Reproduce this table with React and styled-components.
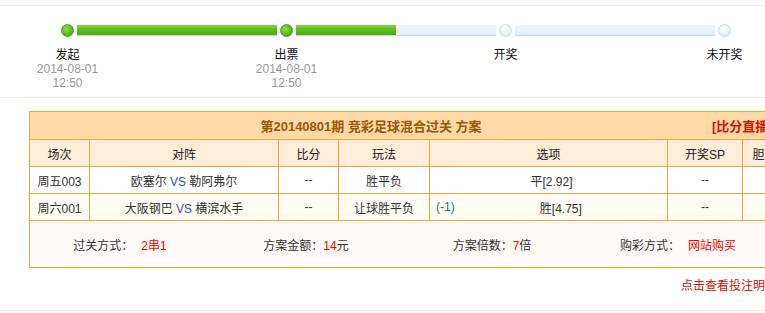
import React from "react";
import styled, { createGlobalStyle } from "styled-components";

/* ========== DATA ========== */

const steps = [
  { name: "发起", date: "2014-08-01", time: "12:50", done: true },
  { name: "出票", date: "2014-08-01", time: "12:50", done: true },
  { name: "开奖", done: false },
  { name: "未开奖", done: false },
];

// fill of the bar that follows each step (percent)
const bars = [100, 50, 0];

const matches = [
  { no: "周五003", home: "欧塞尔", away: "勒阿弗尔", score: "--", play: "胜平负", handicap: "", pick: "平[2.92]", sp: "--" },
  { no: "周六001", home: "大阪钢巴", away: "横滨水手", score: "--", play: "让球胜平负", handicap: "(-1)", pick: "胜[4.75]", sp: "--" },
];

/* ========== STYLES ========== */

const GlobalStyle = createGlobalStyle`
  body {
    margin: 0;
    background: #fff;
    overflow: hidden;
    font-family: "Liberation Sans", "Noto Sans CJK SC", sans-serif;
    font-size: 12px;
    color: #333;
  }
`;

const Page = styled.div`
  width: 800px;
  padding-top: 5px;
`;

const StepPanel = styled.div`
  height: 73px;
  border-top: 1px solid #f9ece4;
  border-bottom: 1px solid #f9ece4;
  padding: 18px 0 0 61px;
`;

const Track = styled.div`
  display: flex;
  align-items: flex-start;
`;

const Step = styled.div`
  width: 13px;
  flex: none;
`;

const Node = styled.div`
  width: 13px;
  height: 13px;
  box-sizing: border-box;
  border-radius: 50%;
  border: 1px solid ${({ $done }) => ($done ? "#4e9f1e" : "#c9d9e7")};
  background: ${({ $done }) =>
    $done
      ? "radial-gradient(circle at 40% 35%, #92e050, #5cb81a 55%, #449d0c)"
      : "radial-gradient(circle at 40% 35%, #ffffff, #e6f0f9 60%, #d6e4f0)"};
`;

const Caption = styled.div`
  margin: 11px -54px 0;
  text-align: center;
  line-height: 14px;
  white-space: nowrap;
`;

const StepName = styled.div`
  color: #111;
`;

const StepTime = styled.div`
  color: #9a9a9a;
`;

const Bar = styled.div`
  width: 200px;
  height: 11px;
  margin: 1px 3px 0;
  flex: none;
  box-sizing: border-box;
  border-bottom: 1px solid #c8d9e6;
  background: linear-gradient(#eef6fd, #deecf8);
  overflow: hidden;
`;

const BarFill = styled.div`
  height: 11px;
  background: linear-gradient(#86d646, #5fc01e 35%, #4faf12 85%, #3f920c);
`;

const Table = styled.table`
  margin: 13px 0 0 29px;
  width: 757px;
  border-collapse: collapse;
  table-layout: fixed;
  border: 1px solid #f7a23a;
`;

const Cell = styled.td`
  border: 1px solid #f7a23a;
  height: 26px;
  padding: 0;
  text-align: center;
  white-space: nowrap;
  overflow: hidden;
`;

const TitleCell = styled(Cell)`
  height: 27px;
  background: #fed9a6;
  font-size: 13px;
  font-weight: bold;
  color: #9b5608;
`;

const LiveLink = styled.span`
  float: right;
  width: 74px;
  text-align: left;
  color: #dd1100;
`;

const HeadRow = styled.tr`
  background: #feedd8;
  color: #222;
`;

const BodyRow = styled.tr`
  background: ${({ $alt }) => ($alt ? "#fffcf3" : "#fff")};
`;

const Vs = styled.span`
  color: #35559a;
`;

const PickBox = styled.div`
  display: flex;
  align-items: center;
  padding-left: 6px;
`;

const Handicap = styled.span`
  color: #0d7f70;
`;

const PickText = styled.span`
  flex: 1;
  text-align: center;
`;

const SummaryCell = styled(Cell)`
  height: 46px;
  background: #fffaf7;
`;

const Summary = styled.div`
  display: grid;
  grid-template-columns: repeat(4, 186px);
  margin-left: -3px;
`;

const SummaryItem = styled.div`
  text-align: center;
  color: #333;
`;

const Red = styled.span`
  color: #f00;
  margin-left: ${({ $gap }) => ($gap ? "8px" : "0")};
`;

const DetailRow = styled.div`
  width: 777px;
  margin-top: 11px;
  text-align: right;
  color: #dd1100;
  line-height: 14px;
`;

const Footer = styled.div`
  margin-top: 17px;
  height: 10px;
  border-top: 1px solid #f5ede6;
  background: #faf7f5;
`;

/* ========== COMPONENT ========== */

const App = () => {
  return (
    <>
      <GlobalStyle />
      <Page>
        <StepPanel>
          <Track>
            {steps.map((s, i) => (
              <React.Fragment key={s.name}>
                <Step>
                  <Node $done={s.done} />
                  <Caption>
                    <StepName>{s.name}</StepName>
                    {s.date && <StepTime>{s.date}</StepTime>}
                    {s.time && <StepTime>{s.time}</StepTime>}
                  </Caption>
                </Step>
                {i < bars.length && (
                  <Bar>
                    <BarFill style={{ width: `${bars[i]}%` }} />
                  </Bar>
                )}
              </React.Fragment>
            ))}
          </Track>
        </StepPanel>

        <Table>
          <colgroup>
            <col style={{ width: 60 }} />
            <col style={{ width: 189 }} />
            <col style={{ width: 60 }} />
            <col style={{ width: 91 }} />
            <col style={{ width: 238 }} />
            <col style={{ width: 75 }} />
            <col style={{ width: 44 }} />
          </colgroup>
          <tbody>
            <tr>
              <TitleCell colSpan={7}>
                <LiveLink>[比分直播]</LiveLink>
                第20140801期 竞彩足球混合过关 方案
              </TitleCell>
            </tr>
            <HeadRow>
              <Cell>场次</Cell>
              <Cell>对阵</Cell>
              <Cell>比分</Cell>
              <Cell>玩法</Cell>
              <Cell>选项</Cell>
              <Cell>开奖SP</Cell>
              <Cell>胆码</Cell>
            </HeadRow>
            {matches.map((m, i) => (
              <BodyRow key={m.no} $alt={i % 2 === 1}>
                <Cell>{m.no}</Cell>
                <Cell>
                  {m.home} <Vs>VS</Vs> {m.away}
                </Cell>
                <Cell>{m.score}</Cell>
                <Cell>{m.play}</Cell>
                <Cell>
                  <PickBox>
                    {m.handicap && <Handicap>{m.handicap}</Handicap>}
                    <PickText>{m.pick}</PickText>
                  </PickBox>
                </Cell>
                <Cell>{m.sp}</Cell>
                <Cell />
              </BodyRow>
            ))}
            <tr>
              <SummaryCell colSpan={7}>
                <Summary>
                  <SummaryItem>
                    过关方式：<Red $gap>2串1</Red>
                  </SummaryItem>
                  <SummaryItem>
                    方案金额：<Red>14</Red>元
                  </SummaryItem>
                  <SummaryItem>
                    方案倍数：<Red>7</Red>倍
                  </SummaryItem>
                  <SummaryItem>
                    购彩方式：<Red $gap>网站购买</Red>
                  </SummaryItem>
                </Summary>
              </SummaryCell>
            </tr>
          </tbody>
        </Table>

        <DetailRow>点击查看投注明细</DetailRow>
        <Footer />
      </Page>
    </>
  );
};

export default App;
